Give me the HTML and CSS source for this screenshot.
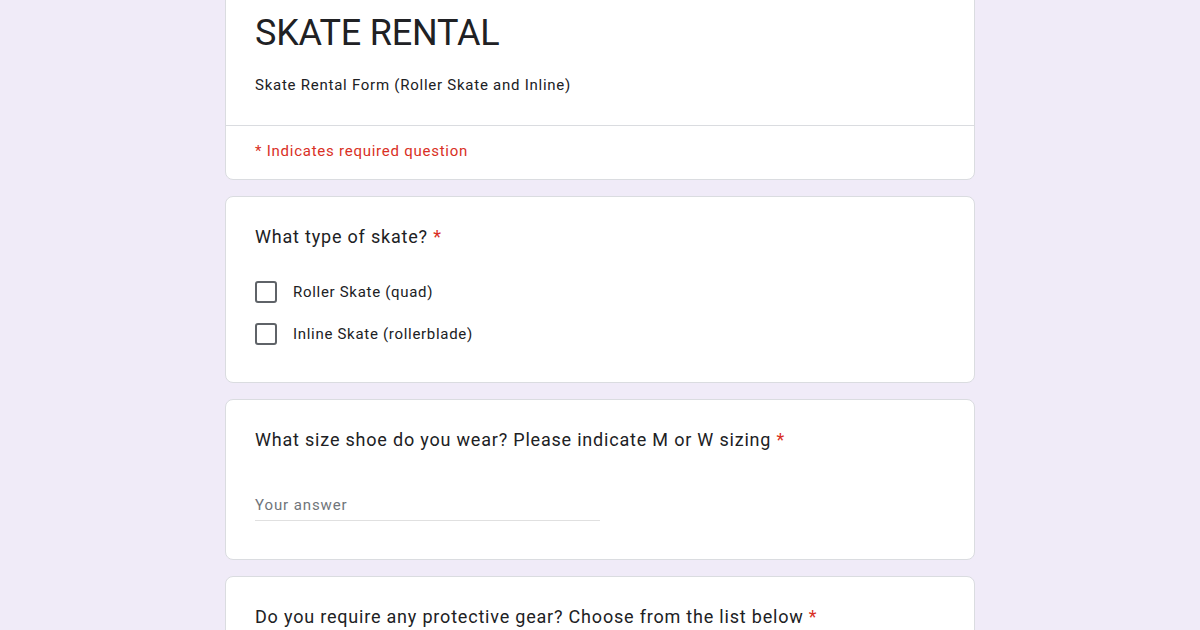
FILE: index.html
```html
<!DOCTYPE html>
<html>
  <head>
    <title>SKATE RENTAL</title>
    <link rel="stylesheet" href="styles.css">
  </head>
  <body>
    <div class="form-container">
      <div class="card header-card">
        <div class="header-top">
          <h1>SKATE RENTAL</h1>
          <p class="description">Skate Rental Form (Roller Skate and Inline)</p>
        </div>
        <div class="header-bottom">
          <span class="required-note">* Indicates required question</span>
        </div>
      </div>

      <div class="card question-card">
        <div class="question">What type of skate? <span class="star">*</span></div>
        <div class="options">
          <label class="option">
            <span class="checkbox"></span>
            <span>Roller Skate (quad)</span>
          </label>
          <label class="option">
            <span class="checkbox"></span>
            <span>Inline Skate (rollerblade)</span>
          </label>
        </div>
      </div>

      <div class="card question-card text-card">
        <div class="question">What size shoe do you wear? Please indicate M or W sizing <span class="star">*</span></div>
        <div class="answer">Your answer</div>
      </div>

      <div class="card question-card">
        <div class="question">Do you require any protective gear? Choose from the list below <span class="star">*</span></div>
        <div class="options">
          <label class="option">
            <span class="checkbox"></span>
            <span>Helmet</span>
          </label>
        </div>
      </div>
    </div>
  </body>
</html>
```

FILE: styles.css
```css
:root {
  --bg-color: #f0ebf8;
  --card-bg: white;
  --border-color: #dadce0;
  --text-color: #202124;
  --red: #d93025;
  --muted: #70757a;
}

body {
  margin: 0;
  background-color: var(--bg-color);
  font-family: Roboto, "Noto Sans", Arial, sans-serif;
  color: var(--text-color);
}

.form-container {
  width: 750px;
  margin: -20px auto 0;
  display: flex;
  flex-direction: column;
  gap: 16px;
}

.card {
  background: var(--card-bg);
  border: 1px solid var(--border-color);
  border-radius: 8px;
}

.header-top {
  padding: 29px 29px 30px;
  border-bottom: 1px solid var(--border-color);
}

h1 {
  margin: 0;
  font-size: 36px;
  line-height: 46px;
  font-weight: 400;
  letter-spacing: -0.2px;
}

.description {
  margin: 19px 0 0;
  font-size: 15px;
  line-height: 20px;
  letter-spacing: 0.75px;
}

.header-bottom {
  padding: 15px 29px 18px;
}

.required-note {
  color: var(--red);
  font-size: 15px;
  line-height: 20px;
  letter-spacing: 0.75px;
}

.question-card {
  padding: 28px 29px 27px;
}

.question {
  font-size: 18px;
  line-height: 24px;
  letter-spacing: 0.8px;
}

.star {
  color: var(--red);
}

.options {
  margin-top: 22px;
  display: flex;
  flex-direction: column;
}

.option {
  display: flex;
  align-items: center;
  gap: 16px;
  height: 42px;
  font-size: 15px;
  letter-spacing: 0.7px;
}

.checkbox {
  width: 18px;
  height: 18px;
  border: 2px solid #5f6368;
  border-radius: 3px;
}

.text-card {
  padding-bottom: 38px;
}

.answer {
  margin-top: 43px;
  width: 50%;
  padding-bottom: 5px;
  border-bottom: 1px solid #e0e0e0;
  font-size: 15px;
  line-height: 20px;
  color: var(--muted);
  letter-spacing: 0.9px;
}
```
